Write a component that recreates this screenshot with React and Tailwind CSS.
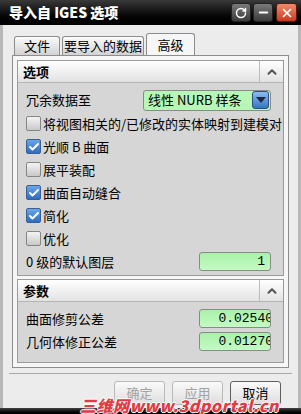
import { RotateCw, Minus, X, ChevronUp, Check } from "lucide-react";

const cjk = { fontFamily: '"Noto Sans CJK SC", "Noto Sans", sans-serif' };

function Box({ checked }) {
  return checked ? (
    <span className="flex h-[15px] w-[15px] shrink-0 items-center justify-center rounded-[2px] border border-[#3b5f8f] bg-gradient-to-b from-[#6aa6e8] to-[#2d6cc0]">
      <Check className="h-[12px] w-[12px] text-white" strokeWidth={4} />
    </span>
  ) : (
    <span className="h-[15px] w-[15px] shrink-0 rounded-[2px] border border-[#858585] bg-gradient-to-b from-[#f4f4f4] to-[#c9c9c9]" />
  );
}

function CheckRow({ checked, label }) {
  return (
    <div className="flex h-[23px] items-center gap-[2px] pl-[8px] text-[13px] text-black">
      <Box checked={checked} />
      <span className="whitespace-nowrap">{label}</span>
    </div>
  );
}

function GreenInput({ value, clip }) {
  return (
    <div
      className={`flex h-[19px] w-[72px] items-center justify-end overflow-hidden rounded-[3px] border border-[#8a8a8a] bg-gradient-to-b from-[#a9f0a9] to-[#c4fbc4] ${
        clip ? "pr-[2px]" : "pr-[5px]"
      }`}
    >
      <span
        className={`whitespace-nowrap text-[13px] text-black ${clip ? "mr-[-5px]" : ""}`}
        style={{ fontFamily: '"Liberation Mono", monospace' }}
      >
        {value}
      </span>
    </div>
  );
}

function SectionHeader({ title }) {
  return (
    <div className="flex h-[22px] items-center border-b border-[#b5b5b5] bg-gradient-to-b from-white to-[#e2e2e2]">
      <span className="flex-1 pl-[5px] text-[13px] font-bold text-black">{title}</span>
      <span className="flex h-full w-[24px] items-center justify-center border-l border-[#bdbdbd]">
        <ChevronUp className="h-[14px] w-[14px] text-[#555]" strokeWidth={3.5} />
      </span>
    </div>
  );
}

function Btn({ label, disabled }) {
  return (
    <button
      type="button"
      className={`flex h-[24px] w-[51px] items-center justify-center rounded-[3px] border bg-gradient-to-b from-[#fafafa] to-[#dedede] text-[13px] ${
        disabled ? "border-[#b9b9b9] text-[#a3a3a3]" : "border-[#5f5f5f] text-black"
      }`}
    >
      {label}
    </button>
  );
}

export default function App() {
  return (
    <div className="relative flex h-[414px] w-[301px] flex-col overflow-hidden bg-[#ececec]" style={cjk}>
      {/* title bar */}
      <div className="flex h-[25px] items-center bg-gradient-to-b from-[#3a3a3a] via-[#111] to-[#000] pl-[9px] pr-[4px]">
        <span className="flex-1 text-[14px] font-black text-white">导入自 IGES 选项</span>
        <div className="flex items-center gap-[2px]">
          <span className="flex h-[19px] w-[20px] items-center justify-center rounded-[3px] border border-[#222] bg-gradient-to-b from-[#7a7a7a] to-[#3c3c3c]">
            <RotateCw className="h-[12px] w-[12px] text-white" strokeWidth={3} />
          </span>
          <span className="flex h-[19px] w-[20px] items-center justify-center rounded-[3px] border border-[#222] bg-gradient-to-b from-[#7a7a7a] to-[#3c3c3c]">
            <Minus className="h-[13px] w-[13px] text-white" strokeWidth={3.5} />
          </span>
          <span className="ml-[1px] flex h-[19px] w-[21px] items-center justify-center rounded-[3px] border border-[#5a1a10] bg-gradient-to-b from-[#f08a6c] to-[#c8381c]">
            <X className="h-[14px] w-[14px] text-white" strokeWidth={3} />
          </span>
        </div>
      </div>

      {/* body */}
      <div className="flex flex-1 flex-col border-x-[3px] border-[#b8b8b8]">
        {/* tabs */}
        <div className="flex items-end gap-[2px] pl-[11px] pt-[8px]">
          <div className="flex h-[19px] w-[46px] items-center justify-center rounded-t-[3px] border border-b-0 border-[#8d8d8d] bg-gradient-to-b from-[#fbfbfb] to-[#d2d2d2] text-[13px]">
            文件
          </div>
          <div className="flex h-[19px] w-[82px] items-center justify-center rounded-t-[3px] border border-b-0 border-[#8d8d8d] bg-gradient-to-b from-[#fbfbfb] to-[#d2d2d2] text-[13px]">
            要导入的数据
          </div>
          <div className="mb-[-1px] flex h-[23px] w-[49px] items-center justify-center rounded-t-[3px] border border-b-0 border-[#8d8d8d] bg-[#f6f6f6] text-[13px]">
            高级
          </div>
        </div>

        {/* tab panel */}
        <div className="mx-[9px] flex h-[313px] flex-col gap-[3px] border border-[#8d8d8d] bg-[#f6f6f6] p-[4px]">
          <div className="flex flex-col border border-[#9a9a9a]">
            <SectionHeader title="选项" />
            <div className="flex flex-col bg-[#d6d6d6] pb-[2px] pt-[5px]">
              <div className="flex h-[24px] items-center justify-between pl-[8px] pr-[12px] text-[13px]">
                <span>冗余数据至</span>
                <div className="flex h-[21px] w-[128px] items-center rounded-[3px] border border-[#8a8a8a] bg-[#b6f6b6]">
                  <span className="flex-1 pl-[4px] text-[13px]">线性 NURB 样条</span>
                  <span className="mr-[1px] flex h-[18px] w-[17px] items-center justify-center rounded-[3px] border border-[#2b4f80] bg-gradient-to-b from-[#8cbdf0] to-[#3473c6]">
                    <span className="h-0 w-0 border-x-[5px] border-t-[6px] border-x-transparent border-t-[#1a2a40]" />
                  </span>
                </div>
              </div>
              <div className="overflow-hidden">
                <CheckRow label="将视图相关的/已修改的实体映射到建模对象" />
              </div>
              <CheckRow checked label="光顺 B 曲面" />
              <CheckRow label="展平装配" />
              <CheckRow checked label="曲面自动缝合" />
              <CheckRow checked label="简化" />
              <CheckRow label="优化" />
              <div className="flex h-[23px] items-center justify-between pl-[8px] pr-[12px] text-[13px]">
                <span>0 级的默认图层</span>
                <GreenInput value="1" />
              </div>
            </div>
          </div>

          <div className="flex flex-col border border-[#9a9a9a]">
            <SectionHeader title="参数" />
            <div className="flex flex-col bg-[#d6d6d6] pb-[9px] pt-[5px]">
              <div className="flex h-[23px] items-center justify-between pl-[8px] pr-[12px] text-[13px]">
                <span>曲面修剪公差</span>
                <GreenInput value="0.02540" clip />
              </div>
              <div className="flex h-[23px] items-center justify-between pl-[8px] pr-[12px] text-[13px]">
                <span>几何体修正公差</span>
                <GreenInput value="0.01270" clip />
              </div>
            </div>
          </div>
        </div>

        <div className="mx-[6px] mt-[5px] h-[1px] bg-[#a9a9a9]" />
        <div className="flex justify-end gap-[7px] pr-[17px] pt-[7px]">
          <Btn label="确定" disabled />
          <Btn label="应用" disabled />
          <Btn label="取消" />
        </div>
      </div>
      <div className="h-[6px] bg-gradient-to-b from-[#444] to-[#000]" />

      {/* watermark */}
      <div className="absolute bottom-[1px] left-[80px] whitespace-nowrap text-[16px] font-black italic leading-none tracking-[0.5px] text-[#e23a44] [text-shadow:1px_0_0_#fff,-1px_0_0_#fff,0_1px_0_#fff,0_-1px_0_#fff]">
        三维网www.3dportal.cn
      </div>
    </div>
  );
}
